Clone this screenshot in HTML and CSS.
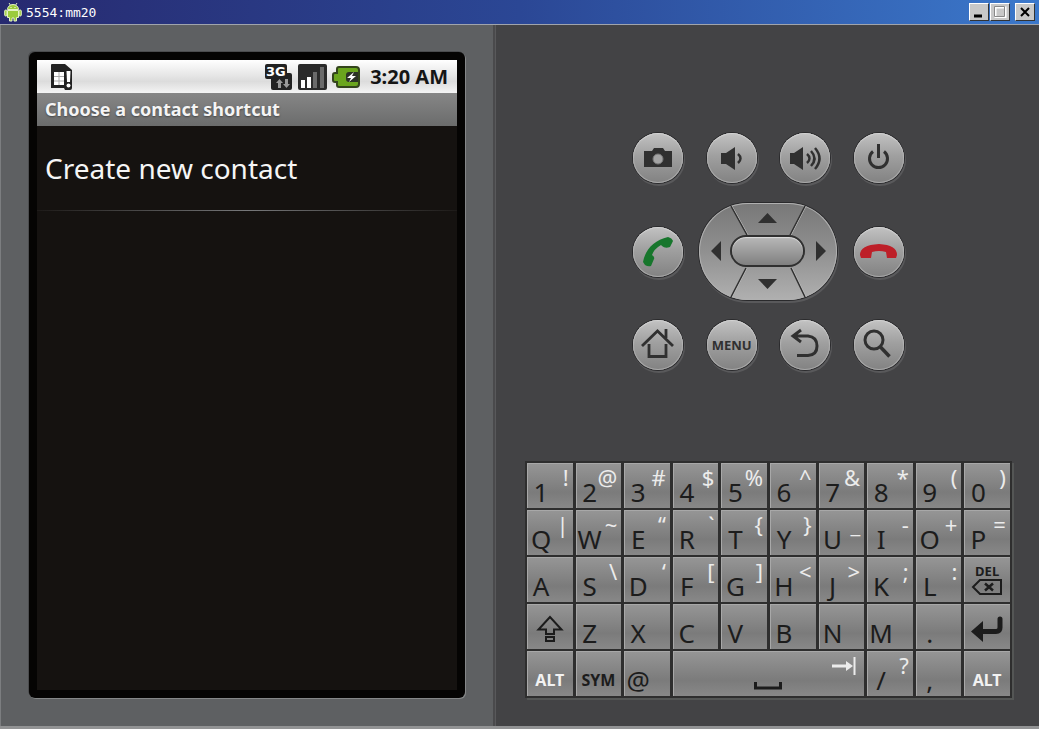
FILE: index.html
```html
<!DOCTYPE html>
<html lang="en">
<head>
  <meta charset="UTF-8" />
  <meta name="viewport" content="width=device-width, initial-scale=1.0"/>
  <title>5554:mm20</title>
  <link rel="stylesheet" href="styles.css">
</head>
<body>
  <header class="titlebar">
    <svg class="app-icon" width="18" height="20" viewBox="0 0 18 20" fill="#9bcb3c" stroke="#e4f3c4" stroke-width="1">
      <path d="M5 1l2 3M13 1l-2 3" fill="none"/>
      <path d="M3.500 7.500a5.500 5 0 0 1 11 0z"/>
      <path d="M3.500 8.500h11v7h-2v3.500h-2.500v-3h-2v3H5.500v-3.500h-2z"/>
      <rect x=".7" y="8" width="2.300" height="6" rx="1"/>
      <rect x="15" y="8" width="2.300" height="6" rx="1"/>
      <path d="M6.500 5.500h1M10.500 5.500h1" stroke="#fff"/>
    </svg>
    <span class="title-text">5554:mm20</span>
    <div class="window-buttons">
      <button class="win-btn" aria-label="Minimize"><svg width="14" height="12"><path d="M2 10h8" stroke="#000" stroke-width="3"/></svg></button>
      <button class="win-btn" aria-label="Maximize"><svg width="14" height="12"><path d="M2.500 1.500h10v10h-10z" fill="none" stroke="#fff" stroke-width="2"/><path d="M1.500 .5h10v10h-10z" fill="none" stroke="#888"/></svg></button>
      <button class="win-btn close" aria-label="Close"><svg width="14" height="12"><path d="M3 2l8 8M11 2l-8 8" stroke="#000" stroke-width="2"/></svg></button>
    </div>
  </header>

  <main class="emulator">
    <section class="device">
      <div class="phone">
        <div class="screen">
          <div class="status-bar">
            <svg class="sim" width="24" height="28" viewBox="0 0 24 28">
              <path d="M1 2q0-1 1-1h13l7 6v18q0 2-2 2h-5l-1-2H1z" fill="#222"/>
              <path d="M4 9h10v13H4z" fill="#fff"/>
              <path d="M9 9v13M4 13.500h10M4 18h10" stroke="#aaa"/>
              <path d="M16.500 8h4l-.5 11h-3z" fill="#fff"/>
              <circle cx="18.500" cy="22.500" r="2" fill="#fff"/>
            </svg>
            <div class="status-icons">
              <svg width="28" height="28" viewBox="0 0 28 28">
                <rect x="6" y="10" width="21" height="17" rx="2" fill="#222"/>
                <rect x="0" y="1" width="22" height="15" rx="2" fill="#222"/>
                <text class="net-text" x="1" y="13">3G</text>
                <path d="M11 20l3.500-4 3.500 4h-2v5h-3v-5zM18 21h2v-5h3v5h2l-3.500 4z" fill="#999"/>
              </svg>
              <svg width="29" height="28" viewBox="0 0 29 28">
                <rect x="0" y="1" width="29" height="26" rx="2" fill="#2a2a2a"/>
                <path d="M3 17h4v8H3zM9 14h4v11H9z" fill="#fff"/>
                <path d="M15 9h4v16h-4zM22 4h4v21h-4z" fill="#6a6a6a"/>
              </svg>
              <svg width="28" height="22" viewBox="0 0 28 22">
                <path d="M5 3q0-2 2-2h17q3 0 3 3v14q0 3-3 3H7q-2 0-2-2v-3H3q-2 0-2-2V9q0-2 2-2h2z" fill="#6aa51e" stroke="#33441c" stroke-width="2"/>
                <path d="M26 6h-9q-3 0-3 3v4q0 3 3 3h9z" fill="#2c3326"/>
                <path d="M22 6l-7 6h4l-2 4 7-6h-4z" fill="#fff"/>
              </svg>
              <span class="clock">3:20 AM</span>
            </div>
          </div>
          <h1 class="screen-title">Choose a contact shortcut</h1>
          <button class="list-item">Create new contact</button>
        </div>
      </div>
    </section>

    <section class="panel">
      <div class="controls">
        <button class="round" aria-label="Camera">
          <svg viewBox="0 0 50 50"><path d="M11 18h8l2-3h9l2 3h7v16H11z" fill="#303030"/><circle cx="25" cy="26" r="5" fill="#a4a4a4" stroke="#777"/></svg>
        </button>
        <button class="round" aria-label="Volume down">
          <svg viewBox="0 0 50 50"><path d="M14 20h5l9-6v23l-9-6h-5z" fill="#303030"/><path d="M31 21q5 4.500 0 9" fill="none" stroke="#303030" stroke-width="2.500"/></svg>
        </button>
        <button class="round" aria-label="Volume up">
          <svg viewBox="0 0 50 50"><path d="M10 20h4l9-6v23l-9-6h-4z" fill="#303030"/><path d="M27 21q5 4.500 0 9M31 18q7 7.500 0 15M35 15q9 10.500 0 21" fill="none" stroke="#303030" stroke-width="2.500"/></svg>
        </button>
        <button class="round" aria-label="Power">
          <svg viewBox="0 0 50 50"><path d="M24.500 11v14M19 18.500a9 9 0 1 0 11 0" fill="none" stroke="#303030" stroke-width="3"/></svg>
        </button>

        <button class="round" aria-label="Call">
          <svg viewBox="0 0 50 50"><path d="M10 35C12 23 21 13 35 10q4 1 5 4l-3 6q-5 2-8-1l-1-1q-7 4-9 10 3 2 2 4l-3 7q-3 1-6-1z" fill="#17762c"/></svg>
        </button>
        <div class="dpad">
          <svg class="dpad-art" viewBox="0 0 138 97">
            <path d="M33 3l16 29M107 3L92 32M48 65L33 94M93 65l14 29" stroke="#c0c0c0"/>
            <path d="M32 3l16 29M106 3L91 32M47 65L32 94M92 65l14 29" stroke="#303030" stroke-width="1.500"/>
            <path d="M59 20l9.500-10L78 20zM59 76h19l-9.500 10zM12 48l10-10v20zM117 38l10 10-10 10z" fill="#303030"/>
          </svg>
          <button class="dpad-btn up" aria-label="Up"></button>
          <button class="dpad-btn left" aria-label="Left"></button>
          <button class="dpad-btn center" aria-label="Select"></button>
          <button class="dpad-btn right" aria-label="Right"></button>
          <button class="dpad-btn down" aria-label="Down"></button>
        </div>
        <button class="round" aria-label="End call">
          <svg viewBox="0 0 50 50"><path d="M6 28q0-10 19-11 18 1 18 11l-1 3h-9l-1-6q-7-2-14 0l-1 6H7z" fill="#bd1f28"/></svg>
        </button>

        <button class="round" aria-label="Home">
          <svg viewBox="0 0 50 50"><path d="M9 26l15.500-15L40 26M33 18V9M16 24v12.500h17V24" fill="none" stroke="#303030" stroke-width="2.800"/></svg>
        </button>
        <button class="round menu">MENU</button>
        <button class="round" aria-label="Back">
          <svg viewBox="0 0 50 50"><path d="M21 10l-8 6 8 6M13 16h15q9 1 9 10t-9 9.500H17" fill="none" stroke="#303030" stroke-width="3"/></svg>
        </button>
        <button class="round" aria-label="Search">
          <svg viewBox="0 0 50 50"><circle cx="20" cy="20" r="9" fill="none" stroke="#303030" stroke-width="3"/><path d="M26.500 27l9 9.500" stroke="#303030" stroke-width="3.500"/></svg>
        </button>
      </div>

      <div class="keyboard">
        <button class="key"><span class="main">1</span><span class="alt">!</span></button>
        <button class="key"><span class="main">2</span><span class="alt">@</span></button>
        <button class="key"><span class="main">3</span><span class="alt">#</span></button>
        <button class="key"><span class="main">4</span><span class="alt">$</span></button>
        <button class="key"><span class="main">5</span><span class="alt">%</span></button>
        <button class="key"><span class="main">6</span><span class="alt">^</span></button>
        <button class="key"><span class="main">7</span><span class="alt">&amp;</span></button>
        <button class="key"><span class="main">8</span><span class="alt">*</span></button>
        <button class="key"><span class="main">9</span><span class="alt">(</span></button>
        <button class="key"><span class="main">0</span><span class="alt">)</span></button>

        <button class="key"><span class="main">Q</span><span class="alt">|</span></button>
        <button class="key"><span class="main">W</span><span class="alt">~</span></button>
        <button class="key"><span class="main">E</span><span class="alt">“</span></button>
        <button class="key"><span class="main">R</span><span class="alt">`</span></button>
        <button class="key"><span class="main">T</span><span class="alt">{</span></button>
        <button class="key"><span class="main">Y</span><span class="alt">}</span></button>
        <button class="key"><span class="main">U</span><span class="alt">_</span></button>
        <button class="key"><span class="main">I</span><span class="alt">-</span></button>
        <button class="key"><span class="main">O</span><span class="alt">+</span></button>
        <button class="key"><span class="main">P</span><span class="alt">=</span></button>

        <button class="key"><span class="main">A</span></button>
        <button class="key"><span class="main">S</span><span class="alt">\</span></button>
        <button class="key"><span class="main">D</span><span class="alt">‘</span></button>
        <button class="key"><span class="main">F</span><span class="alt">[</span></button>
        <button class="key"><span class="main">G</span><span class="alt">]</span></button>
        <button class="key"><span class="main">H</span><span class="alt">&lt;</span></button>
        <button class="key"><span class="main">J</span><span class="alt">&gt;</span></button>
        <button class="key"><span class="main">K</span><span class="alt">;</span></button>
        <button class="key"><span class="main">L</span><span class="alt">:</span></button>
        <button class="key del">
          <span>DEL</span>
          <svg width="32" height="18" viewBox="0 0 32 18" fill="none" stroke="#1c1c1c" stroke-width="2"><path d="M9 2h21v14H9L2 9z"/><path d="M14 5.500l8 7M22 5.500l-8 7" stroke-width="2.500"/></svg>
        </button>

        <button class="key icon" aria-label="Shift">
          <svg width="28" height="28" viewBox="0 0 28 28" fill="none" stroke="#1c1c1c" stroke-width="2"><path d="M14 2L2.500 14.500H10V19h8v-4.500h7.500z"/><path d="M10 22h8v4h-8z"/></svg>
        </button>
        <button class="key"><span class="main">Z</span></button>
        <button class="key"><span class="main">X</span></button>
        <button class="key"><span class="main">C</span></button>
        <button class="key"><span class="main">V</span></button>
        <button class="key"><span class="main">B</span></button>
        <button class="key"><span class="main">N</span></button>
        <button class="key"><span class="main">M</span></button>
        <button class="key"><span class="main">.</span></button>
        <button class="key icon" aria-label="Enter">
          <svg width="32" height="26" viewBox="0 0 32 26"><path d="M0 15.500L12 5v21z" fill="#1c1c1c"/><path d="M10 15.500h15q4 0 4-4V3" fill="none" stroke="#1c1c1c" stroke-width="5" stroke-linecap="round"/></svg>
        </button>

        <button class="key word light">ALT</button>
        <button class="key word">SYM</button>
        <button class="key"><span class="main">@</span></button>
        <button class="key space" aria-label="Space">
          <svg class="space-bar" width="28" height="8" viewBox="0 0 28 8"><path d="M1.500 0v6h25V0" fill="none" stroke="#1c1c1c" stroke-width="3"/></svg>
          <svg class="tab" width="24" height="20" viewBox="0 0 24 20"><path d="M0 10h16" stroke="#ececec" stroke-width="3"/><path d="M14 5l7 5-7 5z" fill="#ececec"/><path d="M22.500 1v18" stroke="#ececec" stroke-width="2"/></svg>
        </button>
        <button class="key"><span class="main">/</span><span class="alt">?</span></button>
        <button class="key"><span class="main">,</span></button>
        <button class="key word light">ALT</button>
      </div>
    </section>
  </main>
</body>
</html>
```
FILE: styles.css
```css
* {
  box-sizing: border-box;
}
body {
  margin: 0;
  min-height: 100vh;
  display: flex;
  flex-direction: column;
  font-family: 'Noto Sans', 'Open Sans', sans-serif;
  background: #434345;
}
button {
  font-family: inherit;
  padding: 0;
  border: none;
  cursor: pointer;
}
svg {
  display: block;
}

/* window title bar */
.titlebar {
  height: 25px;
  display: flex;
  align-items: center;
  padding: 0 4px;
  background: linear-gradient(to right, #272a70, #2b4795 50%, #3b78cb);
  border-bottom: 1px solid #a0a4ac;
}
.title-text {
  margin-left: 4px;
  color: #fff;
  font-family: 'DejaVu Sans Mono', monospace;
  font-size: 13px;
}
.window-buttons {
  display: flex;
  gap: 1px;
  margin-left: auto;
}
.win-btn {
  width: 20px;
  height: 18px;
  display: flex;
  align-items: center;
  justify-content: center;
  background: #c8c8c8;
  border: 1px solid;
  border-color: #fff #333 #333 #fff;
}
.close {
  margin-left: 4px;
}

.emulator {
  flex: 1;
  display: grid;
  grid-template-columns: 495fr 544fr;
  border-bottom: 3px solid #929394;
}

/* phone */
.device {
  display: flex;
  padding: 27px 28px 28px;
  background: #5e6062;
  border-left: 1px solid #7c7e80;
  border-right: 2px solid #4a4a4c;
}
.phone {
  flex: 1;
  padding: 8px;
  border-radius: 6px;
  background: #050403;
  box-shadow: 1px 1px 0 #858788, -1px -1px 0 #4b4c4e;
}
.screen {
  height: 100%;
  background: #151210;
}
.status-bar {
  height: 33px;
  display: flex;
  align-items: center;
  justify-content: space-between;
  padding: 0 9px 0 13px;
  background: linear-gradient(#fff, #dcdcdc 65%, #f4f4f4);
}
.status-icons {
  display: flex;
  align-items: center;
  gap: 5px;
}
.net-text {
  font-family: 'DejaVu Sans', sans-serif;
  font-size: 13px;
  font-weight: bold;
  fill: #fff;
}
.clock {
  margin-left: 5px;
  font-size: 20px;
  font-weight: bold;
  line-height: 32px;
  color: #151515;
}
.screen-title {
  margin: 0;
  padding: 0 8px;
  height: 33px;
  font-size: 18px;
  line-height: 32px;
  color: #f4f4f4;
  text-shadow: 0 1px 2px #444;
  background: linear-gradient(#868686, #6b6c6c);
}
.list-item {
  display: block;
  width: 100%;
  height: 85px;
  padding: 0 8px;
  text-align: left;
  font-size: 28px;
  line-height: 40px;
  color: #f5f5f5;
  background: none;
  border-bottom: 1px solid;
  border-image: linear-gradient(to right, #1d1a18, #77787a 50%, #1d1a18) 1;
}

/* hardware buttons */
.panel {
  display: flex;
  flex-direction: column;
  align-items: center;
  padding: 108px 0 0 2px;
  border-left: 1px solid #59595b;
}
.controls {
  width: 271px;
  display: grid;
  grid-template-columns: repeat(4, 50px);
  grid-template-rows: 50px 97px 50px;
  row-gap: 20px;
  justify-content: space-between;
  align-items: center;
}
.round {
  width: 50px;
  height: 50px;
  border-radius: 50%;
  background: linear-gradient(#c2c2c2, #a0a0a0 45%, #828282);
  box-shadow: inset 0 1px 1px #d8d8d8, inset 0 0 0 1px #a8a8a8, 0 0 0 1px #2a2a2c, 1px 2px 0 1px #59595b;
}
.round:hover {
  background: #b5b5b5;
}
.menu {
  font-size: 13px;
  font-weight: bold;
  color: #303030;
}
.dpad {
  position: relative;
  grid-column: 2 / 4;
  justify-self: center;
  width: 138px;
  height: 97px;
  display: grid;
  grid-template-columns: 31px 75px 31px;
  grid-template-rows: 32px 32px 32px;
  border-radius: 49px;
  background: linear-gradient(#787878, #909090 50%, #b0b0b0);
  box-shadow: inset 0 0 0 1px #b0b0b0, 0 0 0 1px #2a2a2c, 1px 2px 0 1px #59595b;
}
.dpad-art {
  position: absolute;
  width: 100%;
  height: 100%;
}
.dpad-btn {
  position: relative;
  background: none;
}
.up { grid-area: 1 / 2; }
.left { grid-area: 2 / 1; }
.right { grid-area: 2 / 3; }
.down { grid-area: 3 / 2; }
.center {
  grid-area: 2 / 2;
  border-radius: 16px;
  border: 2px solid #303030;
  background: linear-gradient(#b8b8b8, #808080);
  box-shadow: inset 0 1px 1px #ddd;
}

/* keyboard */
.keyboard {
  width: 90%;
  max-width: 487px;
  margin-top: 91px;
  display: grid;
  grid-template-columns: repeat(10, minmax(0, 1fr));
  grid-auto-rows: 45px;
  gap: 2px 3px;
  padding: 2px;
  background: #2e2e2e;
  box-shadow: 2px 2px 0 #545655;
}
.key {
  display: grid;
  color: #1c1c1c;
  background: linear-gradient(#969696, #7b7b7b 65%, #888888);
  box-shadow: inset 1px 1px 0 #a8a8a8;
}
.key:hover {
  background: #9c9c9c;
}
.main, .alt {
  grid-area: 1 / 1;
}
.main {
  width: 28px;
  align-self: end;
  text-align: center;
  font-size: 26px;
  line-height: 32px;
}
.alt {
  align-self: start;
  justify-self: end;
  padding-right: 4px;
  font-size: 22px;
  line-height: 28px;
  color: #ececec;
}
.icon {
  place-items: center;
  padding-top: 4px;
}
.del {
  align-content: center;
  justify-items: center;
  font-size: 13px;
  font-weight: bold;
  line-height: 14px;
}
.word {
  align-content: end;
  justify-items: center;
  padding-bottom: 5px;
  font-size: 16px;
  font-weight: bold;
  line-height: 22px;
}
.light {
  color: #f2f2f2;
}
.space {
  grid-column: span 4;
}
.space-bar, .tab {
  grid-area: 1 / 1;
}
.space-bar {
  place-self: end center;
  margin-bottom: 6px;
}
.tab {
  place-self: start end;
  margin: 5px 8px;
}
```
